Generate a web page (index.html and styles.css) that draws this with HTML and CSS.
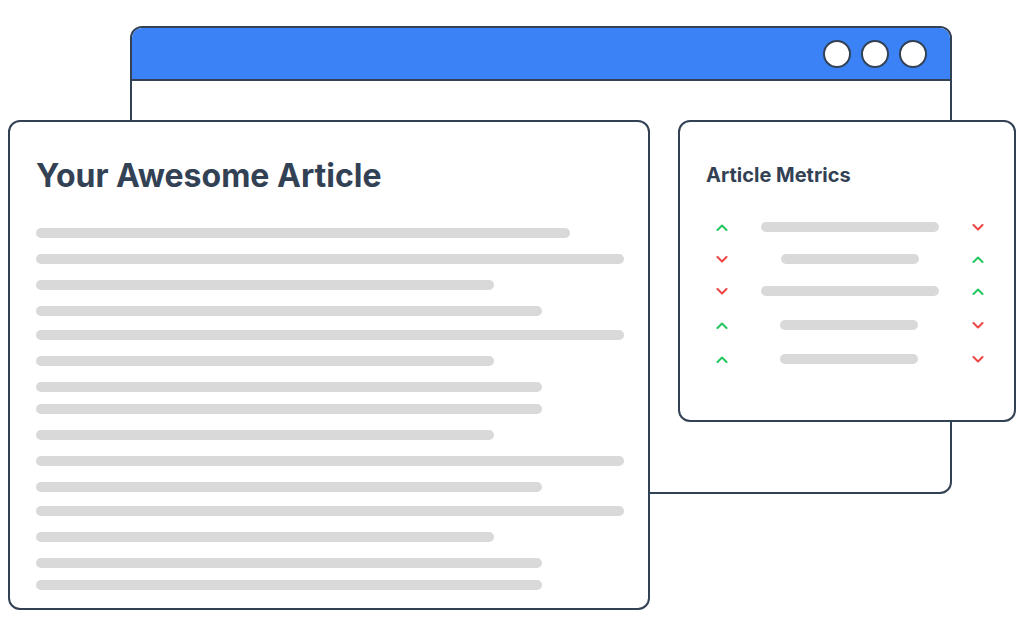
FILE: index.html
```html
<!DOCTYPE html>
<html lang="en">
<head>
<meta charset="utf-8">
<title>Article Metrics</title>
<link rel="stylesheet" href="styles.css">
</head>
<body>
<div class="desktop">
  <div class="window browser">
    <div class="browser-bar">
      <span class="dot"></span><span class="dot"></span><span class="dot"></span>
    </div>
  </div>

  <div class="window article">
    <h1 class="article-title">Your Awesome Article</h1>
    <div class="lines">
      <div class="line w-xl"></div>
      <div class="line w-full"></div>
      <div class="line w-sm"></div>
      <div class="line w-md"></div>
      <div class="line w-full tight"></div>
      <div class="line w-sm"></div>
      <div class="line w-md"></div>
      <div class="line w-md tighter"></div>
      <div class="line w-sm"></div>
      <div class="line w-full"></div>
      <div class="line w-md"></div>
      <div class="line w-full tight"></div>
      <div class="line w-sm"></div>
      <div class="line w-md"></div>
      <div class="line w-md tighter"></div>
    </div>
  </div>

  <div class="window metrics">
    <h2 class="metrics-title">Article Metrics</h2>
    <div class="metric-rows">
      <div class="metric-row">
        <svg class="chev up" viewBox="0 0 12 7"><polyline points="1.5,6 6,1.5 10.5,6"/></svg>
        <div class="bar bar-long"></div>
        <svg class="chev down" viewBox="0 0 12 7"><polyline points="1.5,1 6,5.5 10.5,1"/></svg>
      </div>
      <div class="metric-row">
        <svg class="chev down" viewBox="0 0 12 7"><polyline points="1.5,1 6,5.5 10.5,1"/></svg>
        <div class="bar bar-short"></div>
        <svg class="chev up" viewBox="0 0 12 7"><polyline points="1.5,6 6,1.5 10.5,6"/></svg>
      </div>
      <div class="metric-row">
        <svg class="chev down" viewBox="0 0 12 7"><polyline points="1.5,1 6,5.5 10.5,1"/></svg>
        <div class="bar bar-long"></div>
        <svg class="chev up" viewBox="0 0 12 7"><polyline points="1.5,6 6,1.5 10.5,6"/></svg>
      </div>
      <div class="metric-row wide-gap">
        <svg class="chev up" viewBox="0 0 12 7"><polyline points="1.5,6 6,1.5 10.5,6"/></svg>
        <div class="bar bar-short shift"></div>
        <svg class="chev down" viewBox="0 0 12 7"><polyline points="1.5,1 6,5.5 10.5,1"/></svg>
      </div>
      <div class="metric-row wide-gap">
        <svg class="chev up" viewBox="0 0 12 7"><polyline points="1.5,6 6,1.5 10.5,6"/></svg>
        <div class="bar bar-short shift"></div>
        <svg class="chev down" viewBox="0 0 12 7"><polyline points="1.5,1 6,5.5 10.5,1"/></svg>
      </div>
    </div>
  </div>
</div>
</body>
</html>
```

FILE: styles.css
```css
* { box-sizing: border-box; }

html, body {
  margin: 0;
  padding: 0;
  background: #ffffff;
  font-family: Inter, "Noto Sans", "Liberation Sans", sans-serif;
  color: #334155;
}

.desktop {
  position: relative;
  width: 1024px;
  height: 636px;
  overflow: hidden;
}

.window {
  position: absolute;
  background: #ffffff;
  border: 2px solid #334155;
  border-radius: 12px;
}

/* Browser window (back) */
.browser {
  left: 130px;
  top: 26px;
  width: 822px;
  height: 468px;
  overflow: hidden;
}

.browser-bar {
  height: 53px;
  background: #3b82f6;
  border-bottom: 2px solid #334155;
  display: flex;
  align-items: center;
  justify-content: flex-end;
  gap: 10px;
  padding-right: 23px;
}

.dot {
  width: 28px;
  height: 28px;
  border-radius: 50%;
  background: #ffffff;
  border: 2px solid #334155;
}

/* Article card */
.article {
  left: 8px;
  top: 120px;
  width: 642px;
  height: 490px;
  padding: 34px 24px 0 26px;
}

.article-title {
  margin: 0;
  font-size: 32px;
  line-height: 40px;
  font-weight: 700;
  color: #334155;
}

.lines {
  margin-top: 32px;
  display: flex;
  flex-direction: column;
  gap: 16px;
}

.line {
  height: 10px;
  border-radius: 5px;
  background: #d9d9d9;
}

.line.tight { margin-top: -2px; }
.line.tighter { margin-top: -4px; }

.w-full { width: 588px; }
.w-xl { width: 534px; }
.w-md { width: 506px; }
.w-sm { width: 458px; }

/* Metrics card */
.metrics {
  left: 678px;
  top: 120px;
  width: 338px;
  height: 302px;
  padding: 41px 30px 0 26px;
}

.metrics-title {
  margin: 0;
  font-size: 20px;
  line-height: 24px;
  font-weight: 700;
  color: #334155;
}

.metric-rows {
  margin-top: 34px;
  padding-left: 10px;
  display: flex;
  flex-direction: column;
  gap: 20px;
}

.metric-row {
  height: 12px;
  display: grid;
  grid-template-columns: 12px 1fr 12px;
  align-items: center;
  justify-items: center;
}

.metric-row.wide-gap { margin-top: 2px; }

.chev {
  width: 12px;
  height: 7px;
  fill: none;
  stroke-width: 2;
  stroke-linecap: round;
  stroke-linejoin: round;
}

.chev.up { stroke: #22c55e; }
.chev.down { stroke: #ef4444; }

.bar {
  height: 10px;
  border-radius: 5px;
  background: #d9d9d9;
}

.bar-long { width: 178px; }
.bar-short { width: 138px; }
.bar.shift { position: relative; left: -1px; }
```
